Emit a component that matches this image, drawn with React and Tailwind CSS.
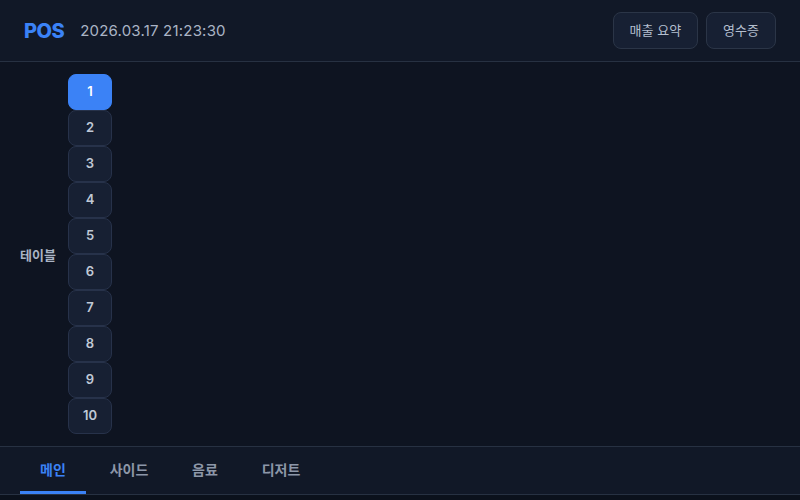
const tables = [1, 2, 3, 4, 5, 6, 7, 8, 9, 10]
const tabs = ['메인', '사이드', '음료', '디저트']

export default function App() {
  const active = 1
  const activeTab = '메인'

  return (
    <div
      className="w-[800px] h-[500px] overflow-hidden flex flex-col bg-[#0e1421] text-slate-300"
      style={{ fontFamily: 'Inter, "Noto Sans CJK KR", sans-serif' }}
    >
      {/* Header */}
      <header className="h-[62px] shrink-0 flex items-center justify-between px-6 bg-[#111827] border-b border-[#273142]">
        <div className="flex items-center gap-4 pt-px">
          <span className="text-[20px] font-extrabold text-[#3b82f6] tracking-tight">POS</span>
          <span className="text-[15px] text-[#aab4c5] tracking-[0.2px]">2026.03.17 21:23:30</span>
        </div>
        <div className="flex items-center gap-2">
          <button className="h-[37px] px-4 rounded-lg border border-[#2b3547] bg-[#172033] text-[13px] text-[#b4bfcf]">
            매출 요약
          </button>
          <button className="h-[37px] px-4 rounded-lg border border-[#2b3547] bg-[#172033] text-[13px] text-[#b4bfcf]">
            영수증
          </button>
        </div>
      </header>

      {/* Tables */}
      <main className="h-[384px] shrink-0 flex items-center pl-5 gap-[13px]">
        <span className="text-[13px] font-bold text-[#aab4c5] w-[35px] whitespace-nowrap pt-1">테이블</span>
        <div className="flex flex-col">
          {tables.map(t => (
            <button
              key={t}
              className={
                t === active
                  ? 'w-[44px] h-[36px] rounded-lg bg-[#3b82f6] border border-[#3b82f6] text-white text-[13px] font-semibold'
                  : 'w-[44px] h-[36px] rounded-lg bg-[#172033] border border-[#27324a] text-[#c0c9d6] text-[13px] font-semibold'
              }
            >
              {t}
            </button>
          ))}
        </div>
      </main>

      {/* Category tabs */}
      <nav className="h-[49px] shrink-0 flex items-stretch gap-2.5 px-5 bg-[#111827] border-t border-b border-[#273142]">
        {tabs.map(tab => (
          <button
            key={tab}
            className={
              tab === activeTab
                ? 'w-[66px] flex items-center justify-center text-[14px] font-semibold text-[#3b82f6] border-b-[3px] border-[#3b82f6] pt-[1px]'
                : 'w-[66px] flex items-center justify-center text-[14px] font-semibold text-[#8d97a8] border-b-[3px] border-transparent pt-[1px]'
            }
          >
            {tab}
          </button>
        ))}
      </nav>
      <div className="flex-1 bg-[#0b111c]" />
    </div>
  )
}
